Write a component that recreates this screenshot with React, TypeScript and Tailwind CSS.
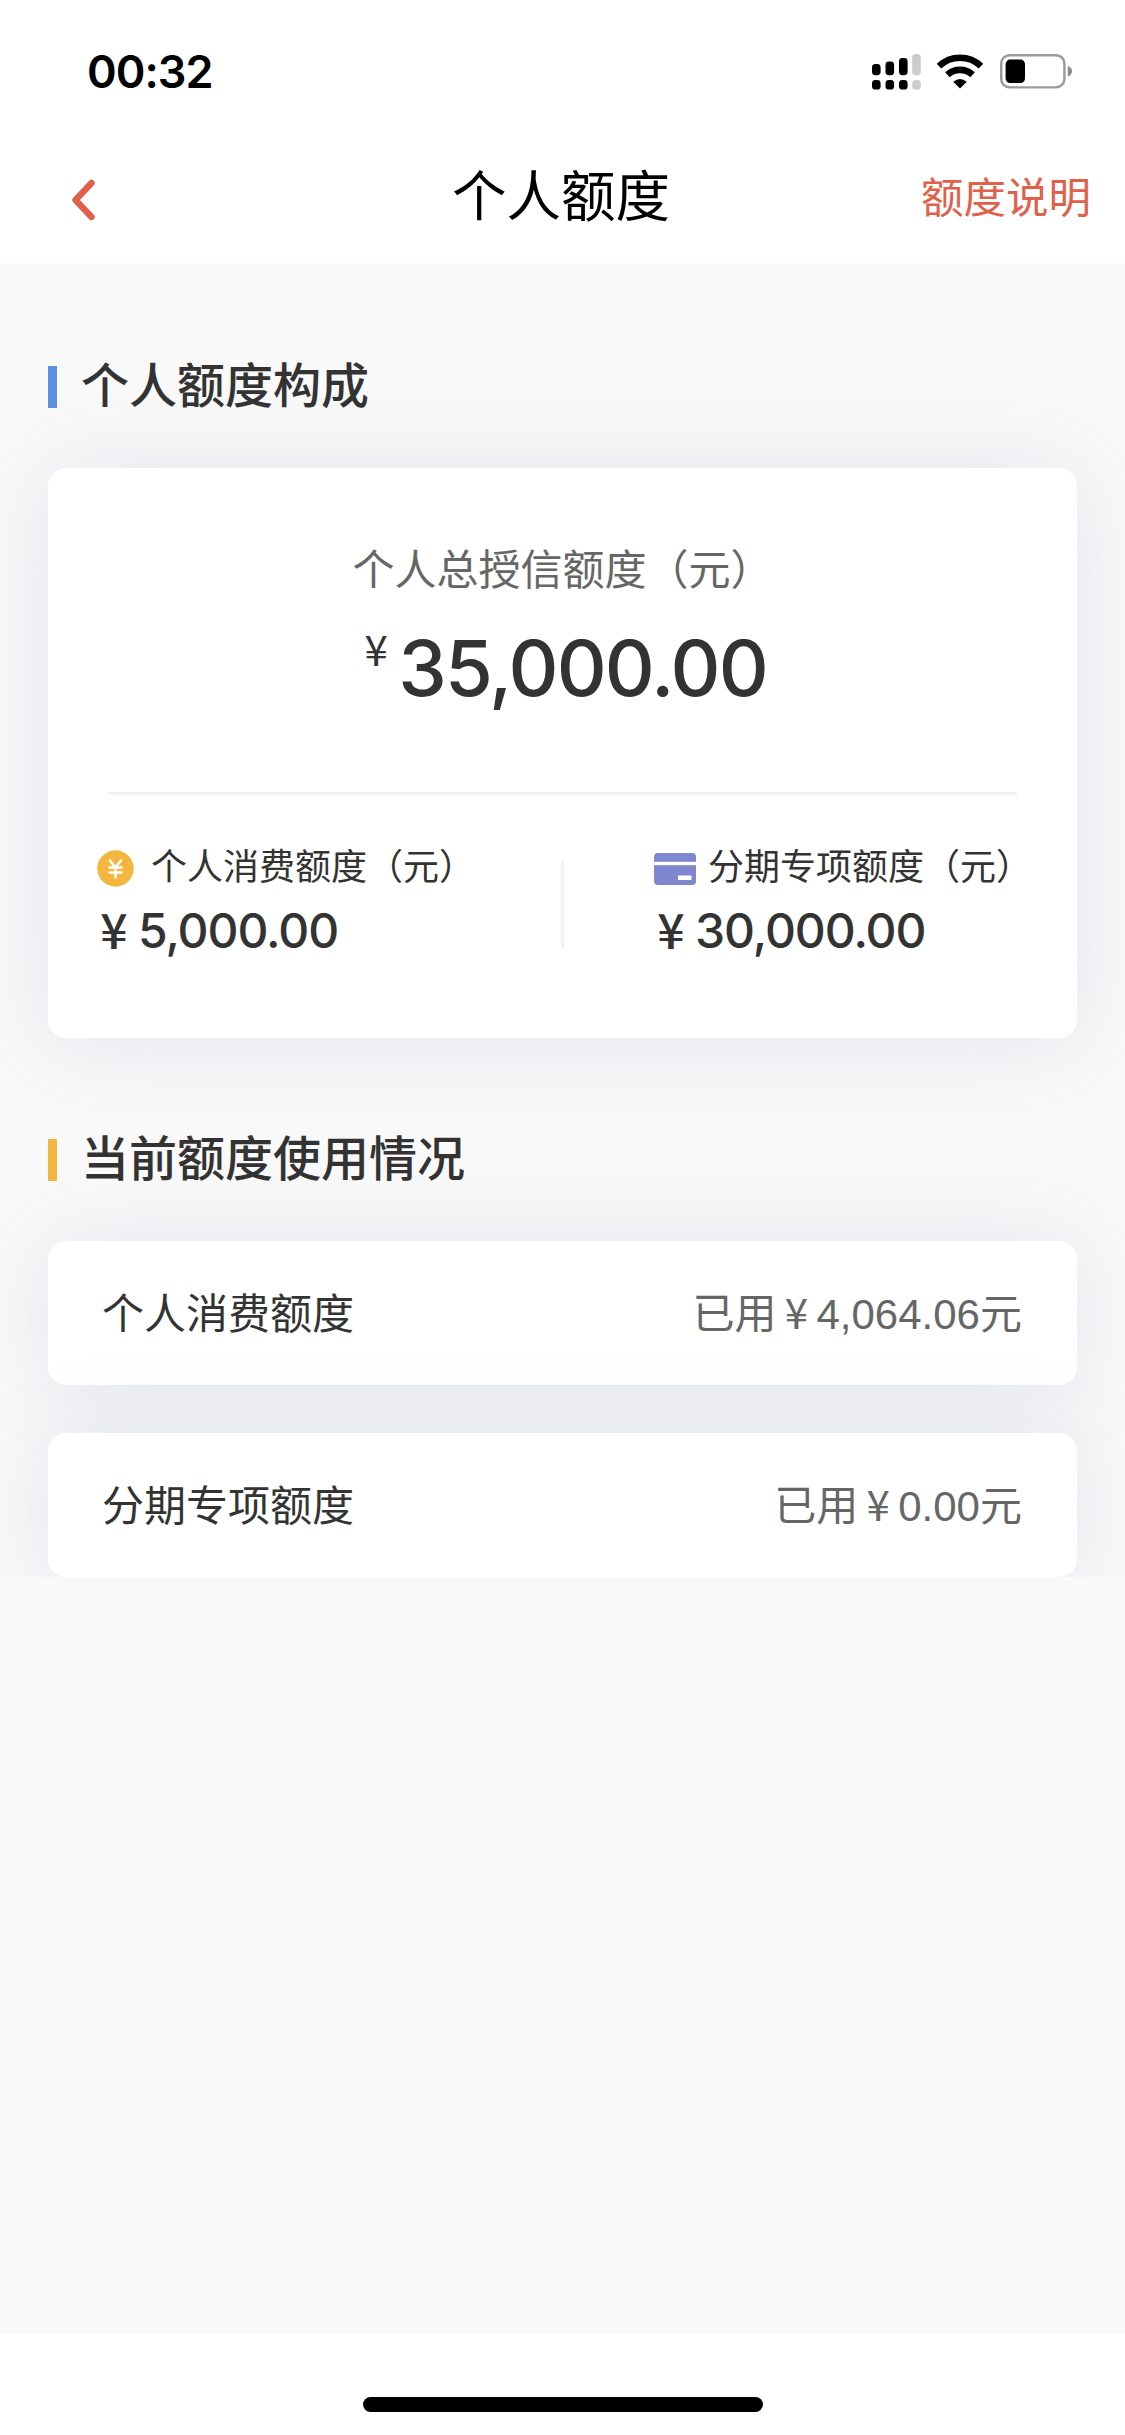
import type { ReactNode } from "react";

interface UsageItem {
  label: string;
  used: string;
}

const usage: UsageItem[] = [
  { label: "个人消费额度", used: "4,064.06" },
  { label: "分期专项额度", used: "0.00" },
];

const CARD = "rounded-[18px] bg-white shadow-[0_4px_90px_rgba(92,106,163,0.14)]";
const DIGITS = "font-['Inter','Noto_Sans_CJK_SC',sans-serif] font-medium";
const YEN = "text-center font-['Noto_Sans_CJK_SC',sans-serif]";

function SignalIcon() {
  return (
    <svg width="49" height="36" viewBox="0 0 49 36" className="block">
      <rect x="0" y="10" width="8.6" height="11.2" rx="3.4" />
      <rect x="13.5" y="7.5" width="8.6" height="13.7" rx="3.4" />
      <rect x="27" y="4" width="8.6" height="17.2" rx="3.4" />
      <rect x="40.2" y="0" width="8.6" height="21.2" rx="3.4" fill="#ccc" />
      <rect x="0" y="26" width="8.6" height="9.6" rx="3.4" />
      <rect x="13.5" y="26" width="8.6" height="9.6" rx="3.4" />
      <rect x="27" y="26" width="8.6" height="9.6" rx="3.4" />
      <rect x="40.2" y="26" width="8.6" height="9.6" rx="3.4" fill="#ccc" />
    </svg>
  );
}

function WifiIcon() {
  return (
    <svg width="48" height="36" viewBox="0 0 48 36" className="block">
      <path d="M3 12.2a30.5 30.5 0 0 1 42 0" fill="none" stroke="#000" strokeWidth="6.6" />
      <path d="M11.4 20.8a18.6 18.6 0 0 1 25.2 0" fill="none" stroke="#000" strokeWidth="6.6" />
      <path d="M17.2 27.8q6.8-5.6 13.6 0L24 34.5z" />
    </svg>
  );
}

function BatteryIcon() {
  return (
    <svg width="74" height="36" viewBox="0 0 74 36" className="block">
      <rect x="1.2" y="1.2" width="63.2" height="32.2" rx="8.5" fill="none" stroke="#999" strokeWidth="2.4" />
      <rect x="5.6" y="5.6" width="19.4" height="23.4" rx="4.5" />
      <path d="M67.8 12c2.6.8 4.2 2.8 4.2 5.3s-1.6 4.500-4.2 5.300z" fill="#8c8c8c" />
    </svg>
  );
}

function CoinIcon() {
  return (
    <svg width="37" height="37" viewBox="0 0 37 37" className="block">
      <circle cx="18.5" cy="18.5" r="18.2" fill="#f4b63f" />
      <path
        d="M13 10.5l5.5 7 5.5-7M12.5 17.5h12M12.5 22.5h12M18.5 17.5v10"
        fill="none"
        stroke="#fff"
        strokeWidth="2.5"
        strokeLinecap="round"
      />
    </svg>
  );
}

function BankCardIcon() {
  return (
    <svg width="42" height="32" viewBox="0 0 42 32" className="block">
      <rect width="42" height="32" rx="4" fill="#7f88cf" />
      <rect y="8.8" width="42" height="3.4" fill="#fff" />
      <rect x="24" y="22.4" width="13.5" height="4.6" rx="0.6" fill="#fff" />
    </svg>
  );
}

function SectionTitle({ bar, children }: { bar: string; children: ReactNode }) {
  return (
    <div className="flex h-[72px] items-center">
      <span className={`h-[42px] w-[9px] ${bar}`} />
      <h2 className="ml-[24px] text-[48px] font-medium leading-[72px] text-[#333]">{children}</h2>
    </div>
  );
}

function SubQuota({ icon, label, amount }: { icon: ReactNode; label: string; amount: string }) {
  return (
    <div>
      <div className="flex h-[54px] items-center">
        <span className="flex w-[54px] pt-[3px]">{icon}</span>
        <span className="whitespace-nowrap pt-[2px] text-[36px] leading-[54px] text-[#333]">{label}</span>
      </div>
      <div className="-ml-[7px] flex h-[74px] items-center text-[#333]">
        <span className={`mb-[7px] w-[48px] text-[48px] font-medium leading-none ${YEN}`}>¥</span>
        <span className={`text-[48px] leading-none tracking-[-0.022em] ${DIGITS}`}>{amount}</span>
      </div>
    </div>
  );
}

export default function App() {
  return (
    <div className="flex h-[2435px] w-[1125px] flex-col overflow-hidden bg-white font-['Liberation_Sans','Noto_Sans_CJK_SC',sans-serif]">
      {/* Status bar */}
      <div className="flex h-[132px] items-start justify-between pl-[87px] pr-[51px]">
        <span className="pt-[44px] font-['Inter',sans-serif] text-[45px] font-semibold leading-[56px] tracking-[-0.022em]">
          00:32
        </span>
        <div className="flex pt-[54px]">
          <SignalIcon />
          <span className="ml-[15px]">
            <WifiIcon />
          </span>
          <span className="ml-[16px]">
            <BatteryIcon />
          </span>
        </div>
      </div>

      {/* Nav bar */}
      <header className="grid h-[131px] grid-cols-[1fr_auto_1fr] items-center pl-[71px] pr-[34px]">
        <svg width="24" height="42" viewBox="0 0 24 42" className="mt-[4px] block">
          <path
            d="M20.5 4L4.5 21l16 17"
            fill="none"
            stroke="#e0604a"
            strokeWidth="6.4"
            strokeLinecap="round"
            strokeLinejoin="round"
          />
        </svg>
        <h1 className="ml-[-40px] pt-px text-[54.5px] leading-[80px] text-black">个人额度</h1>
        <span className="pt-[3px] text-right text-[42.5px] leading-[62px] text-[#e0604a]">额度说明</span>
      </header>

      <main className="h-[2070px] bg-[#f9f9f9]">
        <div className="h-[1314px] overflow-hidden px-[48px] pt-[88px]">
          <SectionTitle bar="bg-[#5b8fe0]">个人额度构成</SectionTitle>

          <section className={`mt-[45px] h-[570px] pt-[71px] ${CARD}`}>
            <p className="text-center text-[42px] leading-[64px] text-[#666]">个人总授信额度（元）</p>
            <div className="mt-[17px] flex h-[96px] justify-center pr-[3px] text-[#333]">
              <span className={`mr-px mt-[7px] w-[42px] text-[42px] leading-none ${YEN}`}>¥</span>
              <span className={`text-[77.5px] leading-[96px] tracking-[-0.024em] ${DIGITS}`}>35,000.00</span>
            </div>
            <div className="mx-[60px] mt-[76px] h-[3px] bg-[#f2f2f2]" />
            <div className="flex pl-[49px] pt-[45px]">
              <div className="w-[464px]">
                <SubQuota icon={<CoinIcon />} label="个人消费额度（元）" amount="5,000.00" />
              </div>
              <div className="mt-[21px] h-[87px] w-[3px] bg-[#f2f2f2]" />
              <div className="pl-[90px]">
                <SubQuota icon={<BankCardIcon />} label="分期专项额度（元）" amount="30,000.00" />
              </div>
            </div>
          </section>

          <div className="mt-[86px]">
            <SectionTitle bar="bg-[#f4b63f]">当前额度使用情况</SectionTitle>
          </div>

          <div className="mt-[45px] flex flex-col gap-[48px]">
            {usage.map((item) => (
              <div
                key={item.label}
                className={`flex h-[144px] items-center justify-between pl-[54px] pr-[55px] pt-[3px] ${CARD}`}
              >
                <span className="text-[42px] text-[#333]">{item.label}</span>
                <span className="flex text-[42px] text-[#666]">
                  已用
                  <span className={`-mt-[4px] w-[40px] ${YEN}`}>¥</span>
                  {item.used}元
                </span>
              </div>
            ))}
          </div>
        </div>
      </main>

      {/* Home indicator */}
      <footer className="flex flex-1 justify-center pt-[64px]">
        <div className="h-[15px] w-[400px] rounded-full bg-black" />
      </footer>
    </div>
  );
}
